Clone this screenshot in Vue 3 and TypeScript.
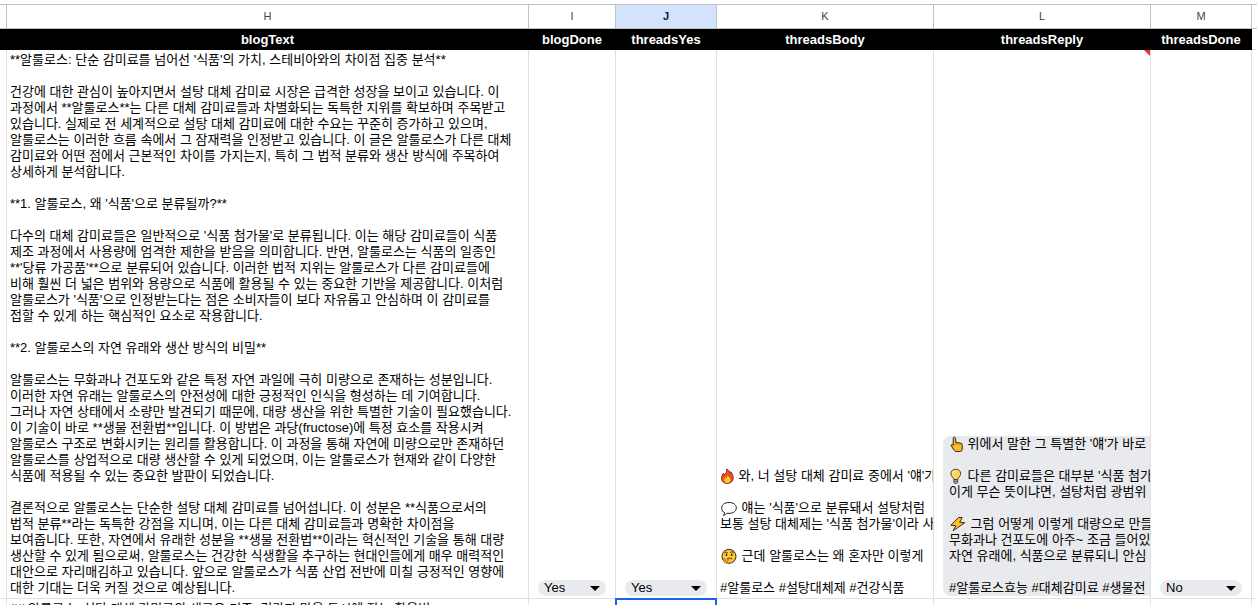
<script setup lang="ts">
import { ref } from 'vue'

type Icon = 'fire' | 'bubble' | 'thinking' | 'point' | 'bulb' | 'bolt'
interface Line {
  icon?: Icon
  text: string
}

const columns = [
  { letter: 'H', title: 'blogText' },
  { letter: 'I', title: 'blogDone' },
  { letter: 'J', title: 'threadsYes' },
  { letter: 'K', title: 'threadsBody' },
  { letter: 'L', title: 'threadsReply' },
  { letter: 'M', title: 'threadsDone' },
]
const activeColumn = 'J'

const blogDone = ref('Yes')
const threadsYes = ref('Yes')
const threadsDone = ref('No')

const blogText: string[] = [
  "**알룰로스: 단순 감미료를 넘어선 '식품'의 가치, 스테비아와의 차이점 집중 분석**",
  '',
  '건강에 대한 관심이 높아지면서 설탕 대체 감미료 시장은 급격한 성장을 보이고 있습니다. 이',
  '과정에서 **알룰로스**는 다른 대체 감미료들과 차별화되는 독특한 지위를 확보하며 주목받고',
  '있습니다. 실제로 전 세계적으로 설탕 대체 감미료에 대한 수요는 꾸준히 증가하고 있으며,',
  '알룰로스는 이러한 흐름 속에서 그 잠재력을 인정받고 있습니다. 이 글은 알룰로스가 다른 대체',
  '감미료와 어떤 점에서 근본적인 차이를 가지는지, 특히 그 법적 분류와 생산 방식에 주목하여',
  '상세하게 분석합니다.',
  '',
  "**1. 알룰로스, 왜 '식품'으로 분류될까?**",
  '',
  "다수의 대체 감미료들은 일반적으로 '식품 첨가물'로 분류됩니다. 이는 해당 감미료들이 식품",
  '제조 과정에서 사용량에 엄격한 제한을 받음을 의미합니다. 반면, 알룰로스는 식품의 일종인',
  "**'당류 가공품'**으로 분류되어 있습니다. 이러한 법적 지위는 알룰로스가 다른 감미료들에",
  '비해 훨씬 더 넓은 범위와 용량으로 식품에 활용될 수 있는 중요한 기반을 제공합니다. 이처럼',
  "알룰로스가 '식품'으로 인정받는다는 점은 소비자들이 보다 자유롭고 안심하며 이 감미료를",
  '접할 수 있게 하는 핵심적인 요소로 작용합니다.',
  '',
  '**2. 알룰로스의 자연 유래와 생산 방식의 비밀**',
  '',
  '알룰로스는 무화과나 건포도와 같은 특정 자연 과일에 극히 미량으로 존재하는 성분입니다.',
  '이러한 자연 유래는 알룰로스의 안전성에 대한 긍정적인 인식을 형성하는 데 기여합니다.',
  '그러나 자연 상태에서 소량만 발견되기 때문에, 대량 생산을 위한 특별한 기술이 필요했습니다.',
  '이 기술이 바로 **생물 전환법**입니다. 이 방법은 과당(fructose)에 특정 효소를 작용시켜',
  '알룰로스 구조로 변화시키는 원리를 활용합니다. 이 과정을 통해 자연에 미량으로만 존재하던',
  '알룰로스를 상업적으로 대량 생산할 수 있게 되었으며, 이는 알룰로스가 현재와 같이 다양한',
  '식품에 적용될 수 있는 중요한 발판이 되었습니다.',
  '',
  '결론적으로 알룰로스는 단순한 설탕 대체 감미료를 넘어섭니다. 이 성분은 **식품으로서의',
  '법적 분류**라는 독특한 강점을 지니며, 이는 다른 대체 감미료들과 명확한 차이점을',
  '보여줍니다. 또한, 자연에서 유래한 성분을 **생물 전환법**이라는 혁신적인 기술을 통해 대량',
  '생산할 수 있게 됨으로써, 알룰로스는 건강한 식생활을 추구하는 현대인들에게 매우 매력적인',
  '대안으로 자리매김하고 있습니다. 앞으로 알룰로스가 식품 산업 전반에 미칠 긍정적인 영향에',
  '대한 기대는 더욱 커질 것으로 예상됩니다.',
]

const threadsBody: Line[] = [
  { icon: 'fire', text: " 와, 너 설탕 대체 감미료 중에서 '얘'가" },
  { text: '' },
  { icon: 'bubble', text: " 얘는 '식품'으로 분류돼서 설탕처럼" },
  { text: "보통 설탕 대체제는 '식품 첨가물'이라 사" },
  { text: '' },
  { icon: 'thinking', text: ' 근데 알룰로스는 왜 혼자만 이렇게' },
  { text: '' },
  { text: '#알룰로스 #설탕대체제 #건강식품' },
]

const threadsReply: Line[] = [
  { icon: 'point', text: " 위에서 말한 그 특별한 '얘'가 바로" },
  { text: '' },
  { icon: 'bulb', text: " 다른 감미료들은 대부분 '식품 첨가" },
  { text: '이게 무슨 뜻이냐면, 설탕처럼 광범위' },
  { text: '' },
  { icon: 'bolt', text: ' 그럼 어떻게 이렇게 대량으로 만들' },
  { text: '무화과나 건포도에 아주~ 조금 들어있' },
  { text: '자연 유래에, 식품으로 분류되니 안심' },
  { text: '' },
  { text: '#알룰로스효능 #대체감미료 #생물전' },
]

const nextBlogText = '## 알룰로스, 설탕 대체 감미료의 새로운 기준, 건강과 맛을 동시에 잡는 활용법'
</script>

<template>
  <svg class="defs" width="0" height="0" aria-hidden="true">
    <symbol id="fire" viewBox="0 0 15 16">
      <path d="M6.600 1C9 2 9.600 4 9.800 5.600c.6-.4.9-1.200.8-2C12.400 5.400 13.300 7.700 13.200 10c-.2 3.400-2.600 5.500-5.900 5.500S1.500 13.300 1.500 10.300c0-2.400 1-3.500 1.800-5.100.5.500.8 1.100.9 1.800C6 5.400 7 3.400 6.600 1Z" fill="#f4511e" stroke="#5b2413" stroke-width=".8" />
      <path d="M7.700 7c.2 1.600 2.800 2.800 2.800 5.100 0 1.900-1.400 2.900-3.100 2.900s-3.200-1-3.200-2.900c0-1.500.8-2.400 1.200-3.200.3.300.5.700.6 1.100C7 9.200 7.800 8.400 7.700 7Z" fill="#ffc928" />
    </symbol>
    <symbol id="bubble" viewBox="0 0 18 16">
      <path d="M5 13C2.900 12.200 1.700 10.400 1.700 8.200c0-3.500 2.900-5.700 7.300-5.700s7.300 2.200 7.300 5.400-2.900 5.500-7.300 5.500c-.7 0-1.400 0-2-.2-.9 1.200-2.200 2-3.800 2.100.9-.6 1.500-1.400 1.800-2.300Z" fill="#fff" stroke="#222" stroke-width="1" stroke-linejoin="round" />
    </symbol>
    <symbol id="thinking" viewBox="0 0 18 16">
      <circle cx="9" cy="8.300" r="7" fill="#ffc83d" stroke="#35290f" />
      <ellipse cx="6.500" cy="6.800" rx=".9" ry="1.200" fill="#35290f" />
      <ellipse cx="11.800" cy="6.800" rx=".9" ry="1.200" fill="#35290f" />
      <path d="M4.600 4.900c.8-.7 1.700-.9 2.700-.5M10.300 4.300c1.200-.8 2.400-.6 3.200.3M7.500 10.600c1.500-.7 3-.7 4.500.1" fill="none" stroke="#35290f" stroke-width=".9" stroke-linecap="round" />
      <path d="M3.700 10.500c.5-.6 1.100-.4 1.300.4l.3 1.300 3.200-1c.8-.2 1 .8.300 1.100l-1.300.6c.3 1.400-.6 2.100-1.700 2.100-1.300 0-2.600-1.100-2.100-4.500Z" fill="#f39b22" stroke="#8a5210" stroke-width=".4" />
    </symbol>
    <symbol id="point" viewBox="0 0 15 16">
      <path d="M4.200 2.300c0-1.500 2.300-1.500 2.400 0l.2 4.100 5.100.8c.9.200 1.300.8 1.300 1.700v4.200c0 1.500-.8 2.400-2.300 2.400H7.300c-1 0-1.600-.4-2.100-1.200L2.300 9.900c-.5-1 .6-1.800 1.400-1.100l.6.600Z" fill="#ffb92e" stroke="#30230d" stroke-linejoin="round" />
      <path d="M6.800 6.400v2.400M8.900 6.900v1.800M11 7.200v1.600" fill="none" stroke="#8a5a12" stroke-width=".6" />
    </symbol>
    <symbol id="bulb" viewBox="0 0 15 16">
      <path d="M4.900 11.500c0-2-3-2.800-3-5.900C1.900 2.900 4 1.200 6.800 1.200s4.900 1.700 4.900 4.400c0 3.100-3 3.900-3 5.900Z" fill="#ffd45c" stroke="#47320e" stroke-width=".9" />
      <path d="M4 5.300c.1-1.200.8-2 1.900-2.300" fill="none" stroke="#fff3c5" stroke-linecap="round" />
      <path d="M4.900 11.500h3.800v2.700c0 .8-.7 1.300-1.900 1.300s-1.900-.5-1.900-1.300Z" fill="#aeb4ba" stroke="#303236" stroke-width=".8" />
      <path d="M5 13.200h3.600" stroke="#303236" stroke-width=".7" />
    </symbol>
    <symbol id="bolt" viewBox="0 0 18 16">
      <path d="M9.600 1.500 1.800 9.200l5 .5-2.600 5 11.600-8-5.200-.6 2.700-4.600Z" fill="#ffc22e" stroke="#3e2c0b" stroke-width="1" stroke-linejoin="round" />
    </symbol>
  </svg>

  <main class="sheet">
    <table class="grid">
      <colgroup>
        <col class="w-index" />
        <col class="w-text" />
        <col class="w-flag" />
        <col class="w-choice" />
        <col class="w-post" />
        <col class="w-post" />
        <col class="w-choice" />
        <col />
      </colgroup>
      <thead>
        <tr class="letters">
          <th></th>
          <th v-for="c in columns" :key="c.letter" scope="col" :class="{ active: c.letter === activeColumn }">
            {{ c.letter }}
          </th>
          <th></th>
        </tr>
      </thead>
      <tbody>
        <tr class="titles">
          <td class="title"></td>
          <th v-for="c in columns" :key="c.title" scope="col" class="title">{{ c.title }}</th>
          <td></td>
        </tr>
        <tr class="record">
          <td></td>
          <td>
            <div v-for="(line, i) in blogText" :key="i" class="line">{{ line }}</div>
          </td>
          <td>
            <div class="chip">
              <select v-model="blogDone" aria-label="blogDone">
                <option>Yes</option>
                <option>No</option>
              </select>
              <svg class="caret" viewBox="0 0 10 5" aria-hidden="true"><path d="M0 0h10L5 5Z" /></svg>
            </div>
          </td>
          <td>
            <div class="chip">
              <select v-model="threadsYes" aria-label="threadsYes">
                <option>Yes</option>
                <option>No</option>
              </select>
              <svg class="caret" viewBox="0 0 10 5" aria-hidden="true"><path d="M0 0h10L5 5Z" /></svg>
            </div>
          </td>
          <td>
            <div v-for="(line, i) in threadsBody" :key="i" class="line">
              <svg v-if="line.icon" class="emoji" :class="line.icon" aria-hidden="true"><use :href="'#' + line.icon" /></svg>{{ line.text }}
            </div>
          </td>
          <td class="noted">
            <div class="note"></div>
            <div class="reply">
              <div v-for="(line, i) in threadsReply" :key="i" class="line">
                <svg v-if="line.icon" class="emoji" :class="line.icon" aria-hidden="true"><use :href="'#' + line.icon" /></svg>{{ line.text }}
              </div>
            </div>
          </td>
          <td>
            <div class="chip">
              <select v-model="threadsDone" aria-label="threadsDone">
                <option>Yes</option>
                <option>No</option>
              </select>
              <svg class="caret" viewBox="0 0 10 5" aria-hidden="true"><path d="M0 0h10L5 5Z" /></svg>
            </div>
          </td>
          <td></td>
        </tr>
        <tr class="next">
          <td></td>
          <td><div class="line">{{ nextBlogText }}</div></td>
          <td></td>
          <td class="selected"><div class="cursor"></div></td>
          <td></td>
          <td></td>
          <td></td>
          <td></td>
        </tr>
      </tbody>
    </table>
  </main>
</template>

<style>
body {
  margin: 0;
  background: #fff;
}
</style>

<style scoped>
.defs {
  position: absolute;
}
.sheet {
  height: 100vh;
  padding-top: 4px;
  box-sizing: border-box;
  overflow: hidden;
  font-family: 'Liberation Sans', 'Noto Sans CJK KR', sans-serif;
  font-size: 13px;
  line-height: 16px;
  color: #000;
}
.grid {
  width: 100%;
  table-layout: fixed;
  border-collapse: separate;
  border-spacing: 0;
}
.w-index { width: 7px; }
.w-text { width: 522px; }
.w-flag { width: 87px; }
.w-choice { width: 101px; }
.w-post { width: 217px; }

th,
td {
  box-sizing: border-box;
  padding: 0;
  border-right: 1px solid #e1e1e1;
  border-bottom: 1px solid #e1e1e1;
}
tr > :last-child {
  border-right: 0;
}
.letters th {
  height: 25px;
  padding-bottom: 1px;
  border-top: 1px solid #c0c0c0;
  border-right-color: #c0c0c0;
  border-bottom-color: #c0c0c0;
  font-size: 11px;
  font-weight: 400;
  color: #444746;
}
.letters .active {
  background: #d3e3fd;
  color: #041e49;
  font-weight: 700;
}
.titles > * {
  height: 21px;
}
.titles .title {
  padding-top: 2px;
  background: #000;
  border-color: #000;
  color: #fff;
  font-weight: 700;
}
.record td {
  padding: 2px 0 2px 3px;
  vertical-align: bottom;
  overflow: hidden;
}
.next td {
  height: 40px;
  padding: 2px 0 2px 3px;
  vertical-align: top;
}
.line {
  height: 16px;
  white-space: pre;
}
.emoji {
  height: 16px;
  vertical-align: top;
}
.fire,
.point,
.bulb {
  width: 15px;
}
.bubble,
.thinking,
.bolt {
  width: 18px;
}
.chip {
  display: grid;
  grid-template-columns: 1fr 10px;
  align-items: center;
  height: 16px;
  margin: 0 9px 0 6px;
  padding-right: 6px;
  border-radius: 8px;
  background: #e8eaed;
}
.chip select {
  appearance: none;
  grid-area: 1 / 1 / 2 / 3;
  width: 100%;
  height: 16px;
  padding: 0 0 0 6px;
  border: 0;
  background: transparent;
  font: inherit;
  color: inherit;
}
.caret {
  grid-area: 1 / 2;
  width: 10px;
  height: 5px;
  pointer-events: none;
}
.reply {
  margin-left: 6px;
  padding-left: 6px;
  border-radius: 8px 0 0 8px;
  background: #e8eaed;
  overflow: hidden;
}
.noted,
.selected {
  position: relative;
}
.note {
  position: absolute;
  top: 0;
  right: 0;
  border-top: 6px solid #ea3323;
  border-left: 6px solid transparent;
}
.cursor {
  position: absolute;
  inset: -1px -1px 0;
  border: 2px solid #1a63e8;
}
</style>
